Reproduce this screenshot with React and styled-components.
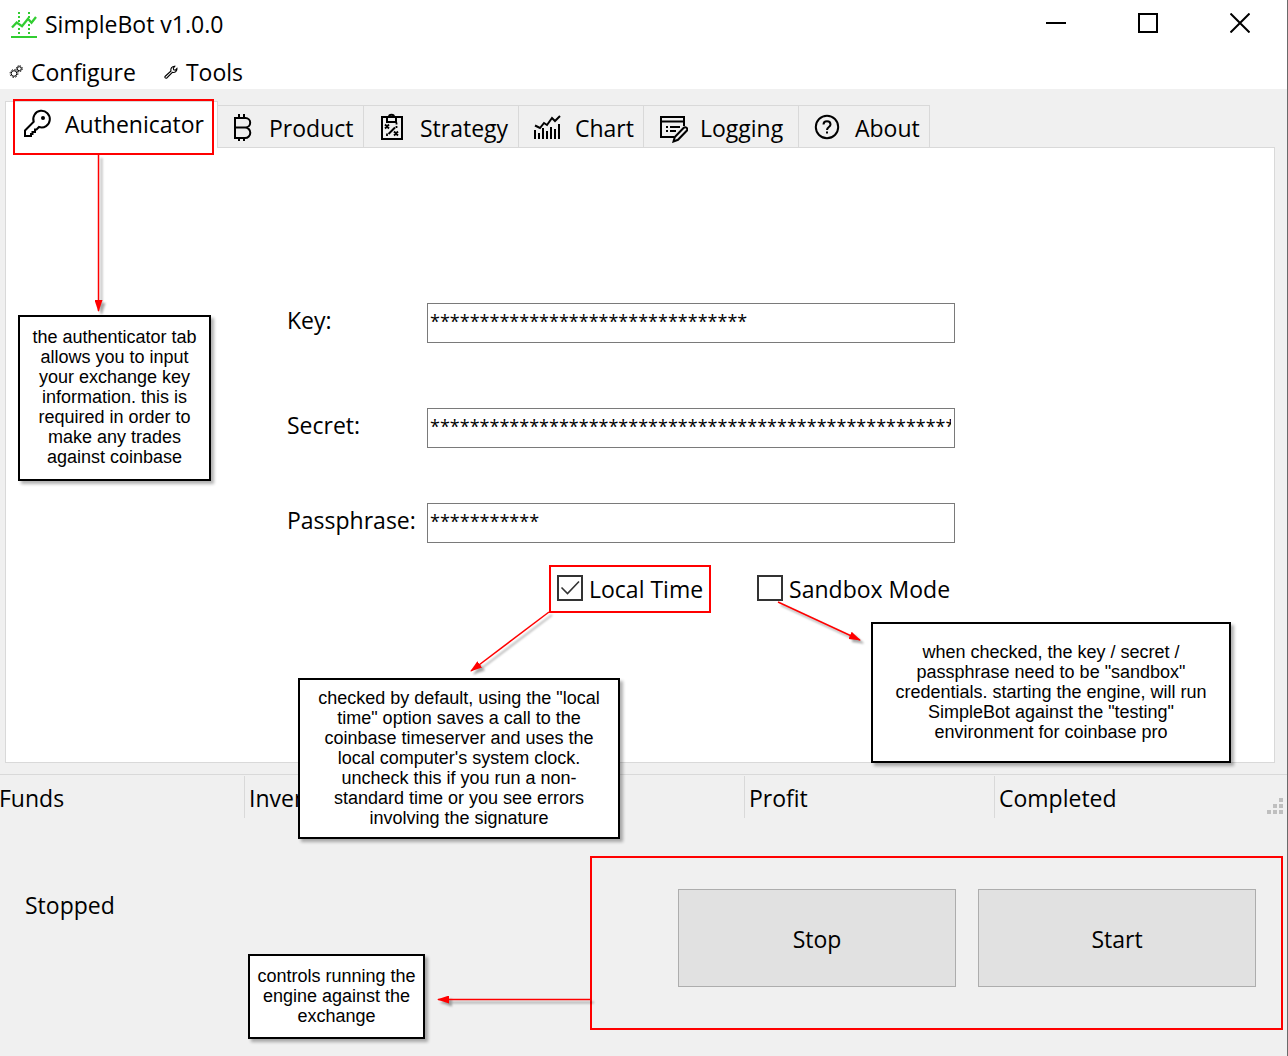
import React from "react";
import styled, { createGlobalStyle, css } from "styled-components";

const GlobalStyle = createGlobalStyle`
  *, *::before, *::after { box-sizing: border-box; }
  body { margin: 0; background: #f0f0f0; }
  button, input { font: inherit; color: inherit; margin: 0; }
`;

const Window = styled.div`
  position: relative;
  display: flex;
  flex-direction: column;
  min-height: 100vh;
  overflow: hidden;
  border-right: 1px solid #6a6a6a;
  background: #f0f0f0;
  color: #000;
  font-family: "Open Sans", "Noto Sans", sans-serif;
  font-size: 23px;
  line-height: 32px;
`;

const TitleBar = styled.header`
  display: flex;
  align-items: flex-start;
  height: 56px;
  padding: 0 1px 0 11px;
  background: #fff;
`;

const Title = styled.h1`
  display: flex;
  align-items: center;
  gap: 8px;
  flex: 1;
  height: 48px;
  margin: 0;
  font-size: inherit;
  font-weight: 400;
`;

const WindowButton = styled.button`
  display: flex;
  align-items: center;
  justify-content: center;
  width: 92px;
  height: 46px;
  padding: 0;
  border: 0;
  background: transparent;
`;

const MenuBar = styled.nav`
  display: flex;
  align-items: flex-start;
  gap: 28px;
  height: 33px;
  padding-left: 9px;
  background: #fff;
`;

const MenuButton = styled.button`
  display: flex;
  align-items: center;
  gap: 8px;
  padding: 0;
  border: 0;
  background: transparent;
  line-height: 32px;
`;

const TabStrip = styled.div`
  display: flex;
  align-items: flex-end;
  height: 58px;
  padding-left: 5px;
`;

const Tab = styled.button`
  position: relative;
  display: flex;
  align-items: center;
  gap: 12px;
  width: ${(p) => p.$width}px;
  height: 42px;
  padding: 3px 0 0 12px;
  border: 1px solid #d9d9d9;
  border-width: 1px 1px 0 0;
  background: #f0f0f0;
  white-space: nowrap;

  ${(p) =>
    p.$selected &&
    css`
      z-index: 1;
      height: 47px;
      margin-bottom: -1px;
      padding: 0 0 2px 17px;
      border-left-width: 1px;
      background: #fff;

      &::after {
        content: "";
        position: absolute;
        top: -3px;
        left: 7px;
        right: 3px;
        height: 56px;
        border: 2px solid #f00;
      }
    `}
`;

const IconSlot = styled.span`
  display: flex;
  width: ${(p) => p.$width}px;
  height: 30px;
`;

const Panel = styled.main`
  margin: 0 12px 0 5px;
  padding: 155px 319px 149px 281px;
  border: 1px solid #d9d9d9;
  background: #fff;
`;

const Field = styled.div`
  display: grid;
  grid-template-columns: 140px minmax(0, 1fr);
  margin-bottom: ${(p) => p.$after}px;
`;

const FieldLabel = styled.label`
  line-height: 34px;
`;

const TextBox = styled.input`
  width: 100%;
  height: 40px;
  padding: 0 3px 4px 2px;
  border: 1px solid #7a7a7a;
  border-radius: 0;
  background: #fff;
  font-size: 18px;
  outline: 0;
`;

const Options = styled.div`
  display: flex;
  gap: 38px;
  padding-left: 262px;
`;

const Option = styled.label`
  display: flex;
  align-items: center;
  gap: 6px;
  height: 48px;
  padding: 0 6px;
  border: 2px solid ${(p) => (p.$marked ? "#f00" : "transparent")};
  white-space: nowrap;
`;

const CheckWrap = styled.span`
  display: grid;
  height: 28px;

  > * {
    grid-area: 1 / 1;
  }

  svg {
    pointer-events: none;
  }
`;

const CheckBox = styled.input`
  appearance: none;
  width: 26px;
  height: 26px;
  border: 2px solid #333;
  background: #fff;

  &:not(:checked) + svg {
    visibility: hidden;
  }
`;

const StatusBar = styled.div`
  display: flex;
  align-items: flex-start;
  height: 44px;
  margin-top: 11px;
  padding-top: 1px;
  border-top: 1px solid #d9d9d9;
`;

const StatusCells = styled.div`
  display: grid;
  grid-template-columns: repeat(5, 250px);
  flex: 1;
  margin-left: -6px;
`;

const StatusCell = styled.div`
  height: 42px;
  padding-left: 4px;
  border-left: 1px solid #d9d9d9;
  line-height: 44px;
`;

const Grip = styled.svg`
  flex: none;
  margin: 22px 4px 0 0;
`;

const Footer = styled.footer`
  display: flex;
  justify-content: space-between;
  align-items: flex-start;
  padding: 38px 4px 26px 25px;
`;

const EngineState = styled.output`
  padding-top: 33px;
`;

const Controls = styled.section`
  display: flex;
  gap: 22px;
  padding: 31px 25px 41px 86px;
  border: 2px solid #f00;
`;

const ControlButton = styled.button`
  width: 278px;
  height: 98px;
  padding: 2px 0 0;
  border: 1px solid #adadad;
  background: #e1e1e1;
`;

const Note = styled.aside`
  position: absolute;
  z-index: 3;
  left: ${(p) => p.$x}px;
  top: ${(p) => p.$y}px;
  display: flex;
  align-items: center;
  justify-content: center;
  width: ${(p) => p.$w}px;
  height: ${(p) => p.$h}px;
  padding-bottom: 2px;
  border: 2px solid #000;
  background: #fff;
  box-shadow: 3px 3px 3px rgba(0, 0, 0, 0.3);
  font-family: "Liberation Sans", Arial, sans-serif;
  font-size: 18px;
  line-height: 20px;
  text-align: center;
  white-space: pre;
`;

const ArrowLayer = styled.svg`
  position: absolute;
  z-index: 2;
  top: 0;
  left: 0;
  overflow: visible;
  pointer-events: none;
  filter: drop-shadow(3px 3px 1px rgba(0, 0, 0, 0.35));
`;

const Drawing = ({ w = 30, h = 30, sw = 2, children }) => (
  <svg
    width={w}
    height={h}
    viewBox={`0 0 ${w} ${h}`}
    fill="none"
    stroke="currentColor"
    strokeWidth={sw}
    aria-hidden="true"
    style={{ flex: "none" }}
  >
    {children}
  </svg>
);

const LogoIcon = () => (
  <svg width="26" height="28" viewBox="0 0 26 28" fill="none" stroke="#32cd32" strokeWidth="2" aria-hidden="true">
    <path d="M0 27h26M8 2v2M8 6v2M8 10v2M8 18v2M8 22v2M18 2v2M18 6v2M18 14v2M18 18v2M18 22v2" />
    <path d="M1 17.500l4.700-5 5.300 3.800 6-7.500 3.500 4 4.500-5.800" strokeWidth="2.300" />
  </svg>
);

const GearsIcon = () => (
  <Drawing w={14} h={14} sw={1}>
    <circle cx="5" cy="8.500" r="2.800" />
    <circle cx="5" cy="8.500" r="3.900" strokeDasharray="1.500 1.560" />
    <circle cx="10.300" cy="3.700" r="2" />
    <circle cx="10.300" cy="3.700" r="3" strokeDasharray="1.300 1.060" />
  </Drawing>
);

const WrenchIcon = () => (
  <Drawing w={14} h={14} sw={1.1}>
    <path d="M1 11.500L7 6C6.300 3.500 8 1 10.800 1.200L9.300 3.200l.4 1.600 1.700.3 1.500-1.700C13.300 6 11 8 8.400 7.400L2.800 13C1.600 13.600.400 12.500 1 11.500z" />
  </Drawing>
);

const KeyIcon = () => (
  <Drawing>
    <path d="M2 21.500L10.700 12.800A8.300 8.300 0 1 1 16 18L13.500 20.500H12V23H9.500V25H8V27H2z" />
    <circle cx="20" cy="9" r="2" fill="currentColor" stroke="none" />
  </Drawing>
);

const BitcoinIcon = () => (
  <Drawing w={27}>
    <path d="M5 26V5h10.500a4.700 4.700 0 0 1 0 9.400H5M15 14.400a5.200 5.200 0 0 1 0 10.600H5M9 1v4M14 1v4M9 25v3M14 25v3" />
  </Drawing>
);

const StrategyIcon = () => (
  <Drawing>
    <path d="M6 4V26h20V4zM11 5v4h9V5M13 4c0-3 5-3 5 0" />
    <path d="M12.500 21l6.500-6.500" />
    <path d="M9 11.500l4 4m0-4l-4 4M18 18.500l4 4m0-4l-4 4M20.500 9.500v2M20.500 13v2M11 20.500v2.500" strokeWidth="1.800" />
  </Drawing>
);

const ChartIcon = () => (
  <Drawing>
    <path d="M4 17v9M8 20v6M12 15v11M16 18v8M20 14v12M24 16v10M28 11v15" />
    <path d="M4 12.500l5 2.500 4-5 3 2 5-7 3 3 5-5" />
  </Drawing>
);

const LoggingIcon = () => (
  <Drawing w={32}>
    <path d="M18 24H5V4h23v9M5 8.500h23M10 14h2M14 14h10M10 18h2M14 18h6" />
    <path d="M17.500 28.500l1.300-4.500L27.500 15c2-2 5 .6 3.200 2.800L22 26.800z" />
  </Drawing>
);

const AboutIcon = () => (
  <Drawing>
    <circle cx="16" cy="14" r="11.200" />
    <path d="M12.500 11.500c0-4.500 7-4.500 7 0 0 2.500-3.500 2.500-3.500 5.500M16 18.500v2" />
  </Drawing>
);

const tabs = [
  { name: "Authenicator", icon: KeyIcon, width: 213, slot: 30, selected: true },
  { name: "Product", icon: BitcoinIcon, width: 146, slot: 27 },
  { name: "Strategy", icon: StrategyIcon, width: 155, slot: 32 },
  { name: "Chart", icon: ChartIcon, width: 125, slot: 32 },
  { name: "Logging", icon: LoggingIcon, width: 155, slot: 32 },
  { name: "About", icon: AboutIcon, width: 131, slot: 32 },
];

const fields = [
  { id: "key", label: "Key:", length: 32, after: 65 },
  { id: "secret", label: "Secret:", length: 88, after: 55 },
  { id: "passphrase", label: "Passphrase:", length: 11, after: 22 },
];

const notes = [
  {
    x: 18, y: 315, w: 193, h: 166,
    text: "the authenticator tab\nallows you to input\nyour exchange key\ninformation. this is\nrequired in order to\nmake any trades\nagainst coinbase",
  },
  {
    x: 298, y: 678, w: 322, h: 161,
    text: "checked by default, using the \"local\ntime\" option saves a call to the\ncoinbase timeserver and uses the\nlocal computer's system clock.\nuncheck this if you run a non-\nstandard time or you see errors\ninvolving the signature",
  },
  {
    x: 871, y: 622, w: 360, h: 141,
    text: "when checked, the key / secret /\npassphrase need to be \"sandbox\"\ncredentials. starting the engine, will run\nSimpleBot against the \"testing\"\nenvironment for coinbase pro",
  },
  {
    x: 248, y: 954, w: 177, h: 85,
    text: "controls running the\nengine against the\nexchange",
  },
];

const arrows = ["M98.500 155V311", "M549 612L471 671", "M778 602L860 640", "M591 999.500H438"];

const CheckOption = ({ label, marked, checked }) => (
  <Option $marked={marked}>
    <CheckWrap>
      <CheckBox type="checkbox" defaultChecked={checked} />
      <Drawing w={26} h={26} sw={1.6}>
        <path d="M4.500 12.500l6 6L22 6.500" stroke="#333" />
      </Drawing>
    </CheckWrap>
    {label}
  </Option>
);

export default function App() {
  return (
    <Window>
      <GlobalStyle />
      <TitleBar>
        <Title>
          <LogoIcon />
          SimpleBot v1.0.0
        </Title>
        <WindowButton aria-label="Minimize">
          <Drawing w={20} h={20}><path d="M0 10h20" /></Drawing>
        </WindowButton>
        <WindowButton aria-label="Maximize">
          <Drawing w={20} h={20}><path d="M1 1h18v18H1z" /></Drawing>
        </WindowButton>
        <WindowButton aria-label="Close">
          <Drawing w={20} h={20}><path d="M.500 .500l19 19M19.500 .500l-19 19" /></Drawing>
        </WindowButton>
      </TitleBar>
      <MenuBar>
        <MenuButton><GearsIcon />Configure</MenuButton>
        <MenuButton><WrenchIcon />Tools</MenuButton>
      </MenuBar>

      <TabStrip role="tablist">
        {tabs.map(({ name, icon: Icon, width, slot, selected }) => (
          <Tab key={name} role="tab" aria-selected={!!selected} $width={width} $selected={selected}>
            <IconSlot $width={slot}><Icon /></IconSlot>
            {name}
          </Tab>
        ))}
      </TabStrip>

      <Panel>
        {fields.map((f) => (
          <Field key={f.id} $after={f.after}>
            <FieldLabel htmlFor={f.id}>{f.label}</FieldLabel>
            <TextBox id={f.id} type="text" defaultValue={"*".repeat(f.length)} />
          </Field>
        ))}
        <Options>
          <CheckOption label="Local Time" marked checked />
          <CheckOption label="Sandbox Mode" />
        </Options>
      </Panel>

      <StatusBar>
        <StatusCells>
          <StatusCell>Funds</StatusCell>
          <StatusCell>Inventory</StatusCell>
          <StatusCell />
          <StatusCell>Profit</StatusCell>
          <StatusCell>Completed</StatusCell>
        </StatusCells>
        <Grip width="16" height="16" viewBox="0 0 16 16" fill="#bfbfbf" aria-hidden="true">
          <path d="M12 0h4v4h-4zM6 6h4v4H6zM12 6h4v4h-4zM0 12h4v4H0zM6 12h4v4H6zM12 12h4v4h-4z" />
        </Grip>
      </StatusBar>

      <Footer>
        <EngineState>Stopped</EngineState>
        <Controls>
          <ControlButton>Stop</ControlButton>
          <ControlButton>Start</ControlButton>
        </Controls>
      </Footer>

      <ArrowLayer width="1" height="1" aria-hidden="true">
        <defs>
          <marker id="head" markerUnits="userSpaceOnUse" markerWidth="12" markerHeight="8" refX="11" refY="4" orient="auto">
            <path d="M0 0L12 4L0 8z" fill="#f00" />
          </marker>
        </defs>
        {arrows.map((d) => (
          <path key={d} d={d} fill="none" stroke="#f00" strokeWidth="1.500" markerEnd="url(#head)" />
        ))}
      </ArrowLayer>
      {notes.map((n) => (
        <Note key={n.x} $x={n.x} $y={n.y} $w={n.w} $h={n.h}>{n.text}</Note>
      ))}
    </Window>
  );
}
